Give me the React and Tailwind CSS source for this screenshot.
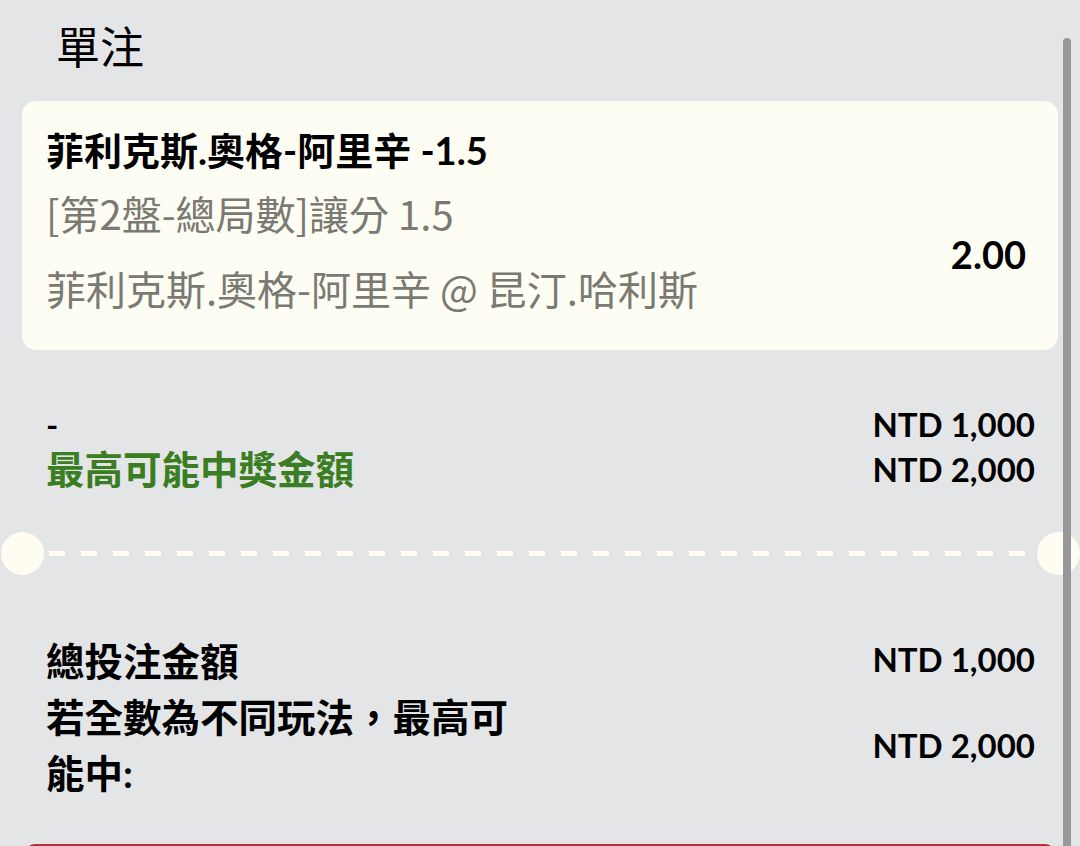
import React from "react";

const font = { fontFamily: "Lato, 'Noto Sans CJK TC', 'Noto Sans', sans-serif" };
const cjk = { fontFamily: "'Noto Sans CJK TC', 'Noto Sans', sans-serif" };

export default function App() {
  return (
    <div
      className="relative h-[846px] w-[1080px] overflow-hidden bg-[#e4e5e7] text-black"
      style={font}
    >
      {/* header */}
      <div className="pl-[56px] pt-[18px] text-[44px] leading-[58px] font-normal">單注</div>

      {/* bet card */}
      <div className="mx-[22px] mt-[25px] flex h-[249px] items-start justify-between rounded-[14px] bg-[#fefdf4] pl-[24px] pr-[32px] pt-[25px]">
        <div className="flex flex-col">
          <div className="text-[38px] font-bold leading-[48px]">菲利克斯.奧格-阿里辛 -1.5</div>
          <div className="mt-[15px] text-[40px] leading-[48px] text-[#7a7972]" style={cjk}>
            [第2盤-總局數]讓分 1.5
          </div>
          <div className="mt-[27px] text-[40px] leading-[48px] text-[#7a7972]" style={cjk}>
            菲利克斯.奧格-阿里辛 @ 昆汀.哈利斯
          </div>
        </div>
        <div className="mt-[104px] text-[38px] font-bold leading-[48px]">2.00</div>
      </div>

      {/* potential win */}
      <div className="mt-[52px] flex justify-between pl-[46px] pr-[45px]">
        <div className="flex flex-col">
          <div className="text-[33px] font-bold leading-[45px]">-</div>
          <div className="text-[38.5px] font-bold leading-[45px] text-[#3a7d22]">最高可能中獎金額</div>
        </div>
        <div className="flex flex-col items-end text-[33px] font-bold leading-[45px]">
          <div>NTD 1,000</div>
          <div>NTD 2,000</div>
        </div>
      </div>

      {/* divider */}
      <div className="mt-[40px] flex items-center">
        <div className="ml-[1px] h-[43px] w-[43px] shrink-0 rounded-full bg-[#fffdf2]" />
        <div className="mx-[5px] h-[5px] flex-1 bg-[repeating-linear-gradient(90deg,#fffdf2_0px,#fffdf2_16px,transparent_16px,transparent_32px)]" />
        <div className="h-[43px] w-[43px] shrink-0 rounded-full bg-[#fffdf2]" />
      </div>

      {/* totals */}
      <div className="mt-[58px] flex flex-col pl-[46px] pr-[45px] text-[38.5px] font-bold leading-[56px]">
        <div className="flex items-center justify-between">
          <div>總投注金額</div>
          <div className="-mt-[4px] text-[33px]">NTD 1,000</div>
        </div>
        <div className="flex items-center justify-between">
          <div className="max-w-[490px]">若全數為不同玩法，最高可能中:</div>
          <div className="text-[33px]">NTD 2,000</div>
        </div>
      </div>

      {/* red button top edge */}
      <div className="mx-[25px] mt-[43px] h-[20px] rounded-t-[10px] bg-[#b3303a]" />

      {/* scrollbar */}
      <div className="absolute right-[9px] top-[38px] h-[830px] w-[8px] rounded-full bg-[#98989a]" />
    </div>
  );
}
